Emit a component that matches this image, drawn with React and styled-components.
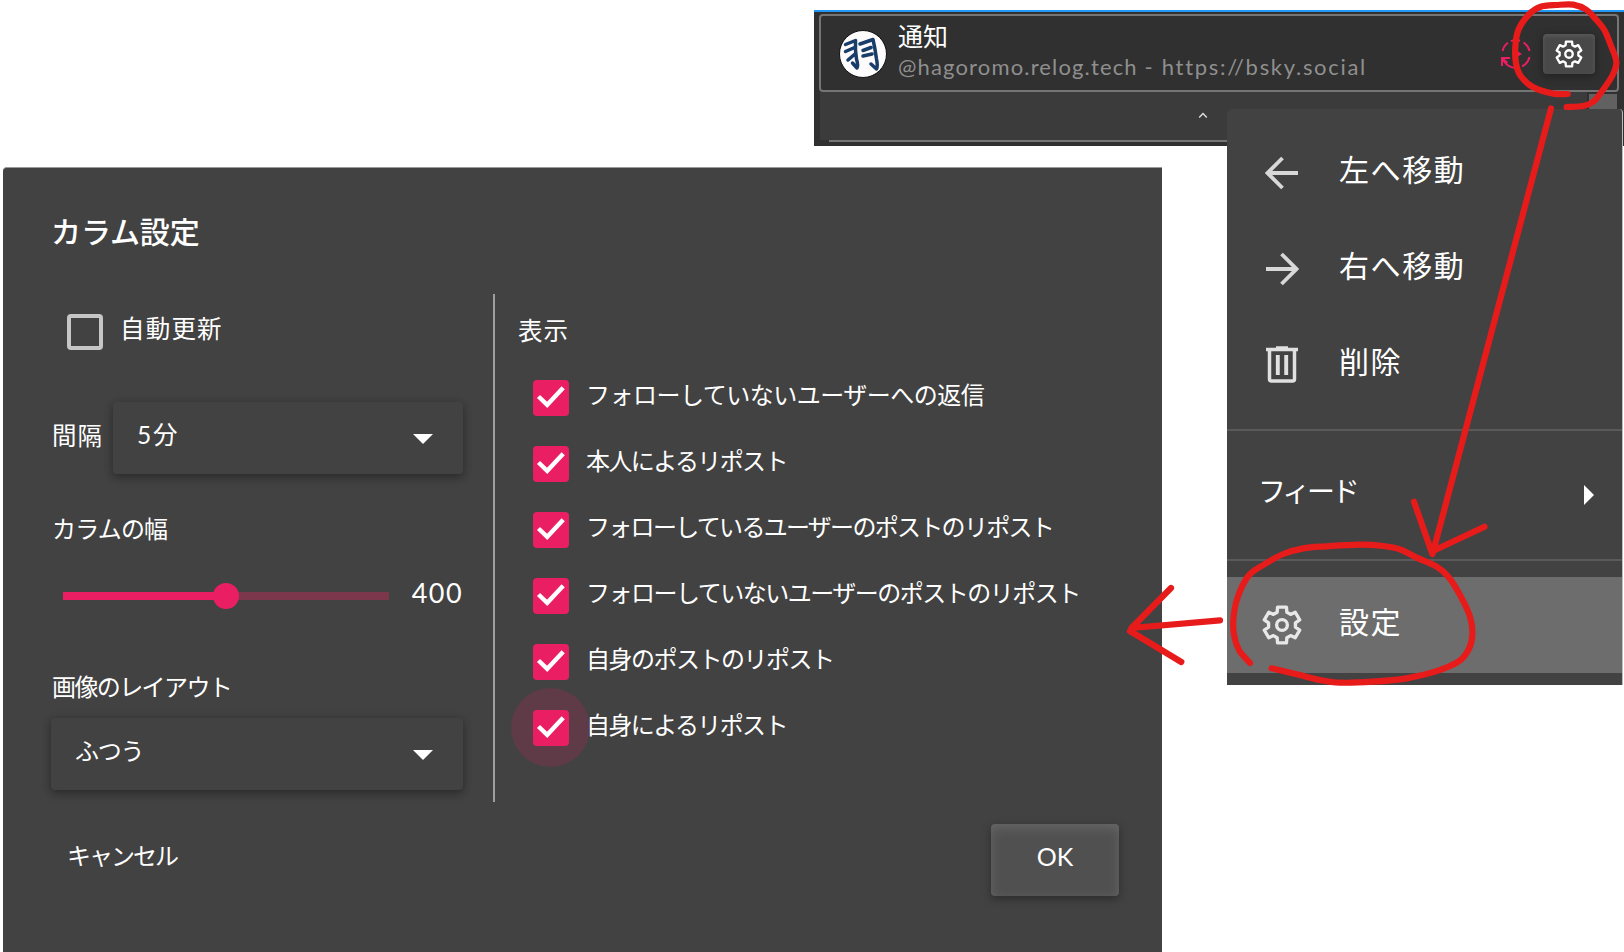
import React from 'react';
import styled, { createGlobalStyle, css } from 'styled-components';

const Global = createGlobalStyle`
  * { box-sizing: border-box; }
  html, body { margin: 0; background: #fff; }
  body { font-family: Lato, "Noto Sans CJK JP", sans-serif; color: #fff; overflow: hidden; }
  button { font: inherit; color: inherit; border: 0; padding: 0; background: none; }
`;

const Canvas = styled.main`
  position: relative;
  width: 1624px;
  height: 952px;
  overflow: hidden;
`;

const Text = styled.span`
  display: block;
  font-size: ${(p) => p.$size || 24}px;
  line-height: 36px;
  letter-spacing: ${(p) => p.$track || 0}px;
  font-weight: ${(p) => p.$weight || 400};
  color: ${(p) => p.$color || '#fff'};
  white-space: pre;
`;

/* Column */
const Column = styled.section`
  position: absolute;
  left: 814px;
  top: 10px;
  width: 810px;
  height: 136px;
  background: #303030;
  border-top: 2px solid #2196f3;
  padding: 2px 5px 0;
`;

const ColumnHeader = styled.header`
  display: flex;
  align-items: center;
  height: 78px;
  border: 2px solid #757575;
  border-radius: 4px;
  padding: 2px 22px 0 18px;
`;

const Avatar = styled.svg`
  width: 48px;
  height: 48px;
  flex: none;
`;

const Titles = styled.div`
  flex: 1;
  padding-left: 11px;
  margin-top: -5px;
`;

const TitleLine = styled.div`
  height: 31px;
  display: flex;
  align-items: center;
`;

const GearButton = styled.button`
  display: flex;
  align-items: center;
  justify-content: center;
  width: 52px;
  height: 40px;
  margin-left: 11px;
  border-radius: 4px;
  background: #484848;
  box-shadow: inset 0 2px 4px rgba(255, 255, 255, 0.1), 0 2px 8px rgba(0, 0, 0, 0.35);
`;

const ColumnBody = styled.div`
  display: flex;
  height: 48px;
  padding-left: 1px;
`;

const Collapse = styled.div`
  width: 767px;
  background: #3b3b3b;
  display: flex;
  justify-content: center;
  padding: 20px 2px 0 0;
`;

const Thumb = styled.div`
  width: 28px;
  margin: 2px 0 0 2px;
  background: #616161;
`;

const ColumnLine = styled.div`
  height: 2px;
  margin-left: 10px;
  background: #757575;
`;

/* Menu */
const Menu = styled.nav`
  position: absolute;
  left: 1227px;
  top: 109px;
  width: 396px;
  height: 576px;
  padding-top: 16px;
  border-radius: 5px 4px 0 0;
  border-right: 1px solid #bdbdbd;
  background: #424242;
  overflow: hidden;
`;

const MenuItem = styled.div`
  display: flex;
  align-items: center;
  height: 96px;
  padding: 0 28px 0 31px;
  background: ${(p) => (p.$active ? '#6d6d6d' : 'transparent')};
  ${Text} { margin-top: -8px; }
`;

const MenuIcon = styled.span`
  display: flex;
  justify-content: center;
  width: 48px;
  margin-right: 33px;
`;

const MenuDivider = styled.div`
  height: 2px;
  margin: 16px 0;
  background: #5a5a5a;
`;

const Triangle = styled.span`
  flex: none;
  width: 0;
  height: 0;
  margin-left: auto;
  border: 10px solid transparent;
  ${(p) =>
    p.$down
      ? css`border-top-color: #fff; border-bottom-width: 0; margin-top: 2px;`
      : css`border-left-color: #fff; border-right-width: 0;`}
`;

/* Dialog */
const Dialog = styled.section`
  position: absolute;
  left: 3px;
  top: 167px;
  width: 1159px;
  height: 785px;
  background: #424242;
  border-top: 1px solid #999;
  border-top-left-radius: 4px;
  padding: 45px 43px 0 48px;
`;

const DialogTitle = styled.h1`
  margin: 0;
  font-size: 30px;
  font-weight: 500;
  line-height: 36px;
  letter-spacing: -0.1px;
`;

const Columns = styled.div`
  display: flex;
  height: 508px;
  margin-top: 45px;
`;

const Left = styled.div`
  display: flex;
  flex-direction: column;
  width: 442px;
  padding: 20px 30px 0 0;
`;

const Right = styled.div`
  flex: 1;
  border-left: 2px solid #9e9e9e;
  padding: 19px 0 0 23px;
`;

const CheckRow = styled.label`
  display: flex;
  align-items: center;
  gap: 17px;
  height: 36px;
  margin-bottom: 30px;
  padding-left: ${(p) => p.$inset}px;
  isolation: isolate;
  ${Text} { margin-top: -6px; }
`;

const Box = styled.span`
  position: relative;
  display: flex;
  flex: none;
  align-items: center;
  justify-content: center;
  width: 36px;
  height: 36px;
  border-radius: 4px;
  ${(p) => (p.$checked ? css`background: #e91e63;` : css`border: 4px solid #c6c6c6;`)}
  ${(p) =>
    p.$ripple &&
    css`
      &::before {
        content: '';
        position: absolute;
        z-index: -1;
        inset: -22px -21px -21px -22px;
        border-radius: 50%;
        background: #5f3b48;
      }
    `}
`;

const CheckList = styled.div`
  padding-top: 31px;
`;

const Row = styled.div`
  display: flex;
  align-items: center;
  margin-top: ${(p) => p.$gap || 0}px;
`;

const Select = styled.div`
  display: flex;
  align-items: center;
  flex: 1;
  height: 72px;
  padding: 0 30px 0 24px;
  border-radius: 4px;
  background: #424242;
  box-shadow: 0 4px 8px rgba(0, 0, 0, 0.24), 0 1px 10px rgba(0, 0, 0, 0.16);
  ${Text} { margin-top: -6px; }
`;

const FieldLabel = styled.div`
  padding: 0 0 ${(p) => p.$lift || 0}px 1px;
  width: ${(p) => p.$width || 'auto'};
  margin-top: ${(p) => p.$top || 0}px;
`;

const Track = styled.div`
  display: flex;
  align-items: center;
  width: 326px;
  height: 8px;
  margin: 6px 23px 0 12px;
  background: linear-gradient(to right, #e91e63 50%, #7d374c 50%);
`;

const Knob = styled.span`
  width: 26px;
  height: 26px;
  margin-left: 150px;
  border-radius: 50%;
  background: #e91e63;
`;

const Actions = styled.footer`
  display: flex;
  justify-content: space-between;
  align-items: center;
  margin-top: 22px;
  padding-left: 16px;
`;

const CancelButton = styled.button`
  padding-bottom: 8px;
`;

const OkButton = styled.button`
  display: flex;
  align-items: center;
  justify-content: center;
  width: 128px;
  height: 72px;
  border-radius: 4px;
  background: #505050;
  box-shadow: inset 0 4px 12px rgba(255, 255, 255, 0.13), 0 3px 9px rgba(0, 0, 0, 0.34);
  ${Text} { margin-top: -8px; }
`;

const Ink = styled.svg`
  position: absolute;
  inset: 0;
  fill: none;
  stroke: #e81b1b;
  stroke-width: 6.2;
  stroke-linecap: round;
  stroke-linejoin: round;
`;

const gearPoints = () => {
  const pts = [];
  for (let i = 0; i < 6; i++) {
    const a = i * 60;
    pts.push([a - 21, 7.1], [a - 14, 9.6], [a + 14, 9.6], [a + 21, 7.1]);
  }
  return pts
    .map(([a, r]) => {
      const t = ((a - 90) * Math.PI) / 180;
      return `${(12 + r * Math.cos(t)).toFixed(2)},${(12 + r * Math.sin(t)).toFixed(2)}`;
    })
    .join(' ');
};

const Gear = ({ size, color = '#fff', width = 1.75 }) => (
  <svg width={size} height={size} viewBox="0 0 24 24" fill="none" stroke={color} strokeWidth={width} strokeLinejoin="round">
    <polygon points={gearPoints()} />
    <circle cx="12" cy="12" r="2.8" />
  </svg>
);

const Arrow = ({ flip }) => (
  <svg width="34" height="34" viewBox="0 0 34 34" fill="none" stroke="#d8d8d8" strokeWidth="3.8" transform={flip ? 'scale(-1 1)' : undefined}>
    <path d="M33 17H3M17.500 2L2.500 17l15 15" />
  </svg>
);

const Trash = () => (
  <svg width="34" height="38" viewBox="0 0 34 38" fill="none" stroke="#e0e0e0" strokeWidth="3.5">
    <path d="M1 3.500h32M11 2h12" />
    <path d="M4.500 4v29q0 2 2 2h21q2 0 2-2V4" />
    <path d="M12.800 9v20M21.200 9v20" strokeWidth="3.900" />
  </svg>
);

const Refresh = () => (
  <svg width="32" height="32" viewBox="0 0 32 32" fill="none" stroke="#e91e63" strokeWidth="2">
    <path d="M2.500 13A14 14 0 0 1 8 4.700M11 3A14 14 0 0 1 20 2.800M23.500 4.500A14 14 0 0 1 29.600 13M29.500 19A14 14 0 0 1 22 28.400M18.500 29.500A14 14 0 0 1 2.500 20" />
    <path d="M2 28v-8h8M2.500 20.500l5 4.500" />
    <path d="M14 11v10l8-5z" fill="#e91e63" stroke="none" />
  </svg>
);

const Check = () => (
  <svg width="36" height="36" viewBox="0 0 36 36" fill="none" stroke="#fff" strokeWidth="4.400">
    <path d="M5.500 16.500l8.700 8.300L30.200 7.800" />
  </svg>
);

const smooth = (p) => {
  let d = `M${p[0]}`;
  for (let i = 0; i < p.length - 1; i++) {
    const a = p[i - 1] || p[i];
    const b = p[i];
    const c = p[i + 1];
    const e = p[i + 2] || c;
    d += `C${b[0] + (c[0] - a[0]) / 6},${b[1] + (c[1] - a[1]) / 6} ${c[0] - (e[0] - b[0]) / 6},${c[1] - (e[1] - b[1]) / 6} ${c}`;
  }
  return d;
};

const third = (pts, y) => smooth(pts.map(([a, b]) => [1200 + a / 3, y + b / 3]));

const topLoop = [
  [1103, 282], [1060, 281], [1000, 262], [962, 228], [948, 190], [946, 140], [955, 90], [985, 45],
  [1020, 21], [1070, 15], [1120, 14], [1160, 30], [1185, 55], [1213, 90], [1232, 135], [1249, 185],
  [1238, 225], [1205, 275], [1180, 305], [1150, 318], [1100, 321],
];

const bottomLoop = [
  [150, 849], [118, 812], [103, 770], [100, 720], [112, 655], [145, 588], [190, 555], [250, 522],
  [310, 505], [380, 499], [480, 494], [550, 498], [600, 508], [650, 533], [710, 560], [745, 590],
  [780, 645], [810, 710], [817, 765], [805, 810], [775, 845], [705, 875], [620, 895], [520, 905],
  [420, 908], [350, 898], [290, 883], [215, 865],
];

const options = [
  { text: 'フォローしていないユーザーへの返信', track: -0.5 },
  { text: '本人によるリポスト', track: -1.6 },
  { text: 'フォローしているユーザーのポストのリポスト', track: -1.7 },
  { text: 'フォローしていないユーザーのポストのリポスト', track: -1.5 },
  { text: '自身のポストのリポスト', track: -1.5 },
  { text: '自身によるリポスト', track: -1.6, ripple: true },
];

export default function App() {
  return (
    <Canvas>
      <Global />
      <Column>
        <ColumnHeader>
          <Avatar viewBox="0 0 48 48">
            <circle cx="24" cy="24" r="23.5" fill="#fdfbfc" stroke="#111" />
            <g fill="none" stroke="#183d69" strokeWidth="3.5" strokeLinecap="round" strokeLinejoin="round">
              <path d="M6.500 14.500L16.500 10.500Q16 20 17.500 29Q19.500 36 18 38L13.500 33M6.500 21.500l9-4M9 30l7-6" />
              <path d="M21 14L34 9.500Q36 18 37.500 29Q39 36 37.500 39L32 34M24 20.500l8-3M24 26l9-2" />
            </g>
          </Avatar>
          <Titles>
            <TitleLine><Text $size={25}>通知</Text></TitleLine>
            <TitleLine>
              <Text $size={22} $track={1.15} $color="#8f8f8f">{'@hagoromo.relog.tech '}</Text>
              <Text $size={22} $track={1.7} $color="#8f8f8f">- https://bsky.social</Text>
            </TitleLine>
          </Titles>
          <Refresh />
          <GearButton><Gear size={32} /></GearButton>
        </ColumnHeader>
        <ColumnBody>
          <Collapse>
            <svg width="10" height="7" viewBox="0 0 10 7" fill="none" stroke="#e0e0e0" strokeWidth="1.4"><path d="M1.200 5.500L5 1.500l3.800 4" /></svg>
          </Collapse>
          <Thumb />
        </ColumnBody>
        <ColumnLine />
      </Column>

      <Menu>
        <MenuItem><MenuIcon><Arrow /></MenuIcon><Text $size={30} $track={1.6}>左へ移動</Text></MenuItem>
        <MenuItem><MenuIcon><Arrow flip /></MenuIcon><Text $size={30} $track={1.6}>右へ移動</Text></MenuItem>
        <MenuItem><MenuIcon><Trash /></MenuIcon><Text $size={30} $track={1.6}>削除</Text></MenuItem>
        <MenuDivider />
        <MenuItem><Text $size={28} $track={-3.2}>フィード</Text><Triangle /></MenuItem>
        <MenuDivider />
        <MenuItem $active><MenuIcon><Gear size={46} color="#e8e8e8" /></MenuIcon><Text $size={30} $track={1.6}>設定</Text></MenuItem>
      </Menu>

      <Dialog>
        <DialogTitle>カラム設定</DialogTitle>
        <Columns>
          <Left>
            <CheckRow $inset={16}><Box /><Text $size={24.5} $track={1.2}>自動更新</Text></CheckRow>
            <Row $gap={22}>
              <FieldLabel $width="62px" $lift={5}><Text $size={24.5} $track={1}>間隔</Text></FieldLabel>
              <Select><Text $size={24.5} $track={1.8}>5分</Text><Triangle $down /></Select>
            </Row>
            <FieldLabel $top={37}><Text $track={-0.8}>カラムの幅</Text></FieldLabel>
            <Row $gap={28}><Track><Knob /></Track><Text $size={27} $track={1.4}>400</Text></Row>
            <FieldLabel $top={58} $lift={13}><Text $track={-1.6}>画像のレイアウト</Text></FieldLabel>
            <Row><Select><Text $track={-1.2}>ふつう</Text><Triangle $down /></Select></Row>
          </Left>
          <Right>
            <Text $size={24.5} $track={1}>表示</Text>
            <CheckList>
              {options.map((o) => (
                <CheckRow key={o.text} $inset={15}>
                  <Box $checked $ripple={o.ripple}><Check /></Box>
                  <Text $track={o.track}>{o.text}</Text>
                </CheckRow>
              ))}
            </CheckList>
          </Right>
        </Columns>
        <Actions>
          <CancelButton><Text $track={-2}>キャンセル</Text></CancelButton>
          <OkButton><Text $size={25}>OK</Text></OkButton>
        </Actions>
      </Dialog>

      <Ink width="1624" height="952" viewBox="0 0 1624 952">
        <path d={third(topLoop, 0)} />
        <path d={third(bottomLoop, 380)} />
        <path d="M1551 108.500L1432.500 554M1414 501.700L1432 553M1484.500 526.700L1434 550.500" />
        <path d="M1220 620.300L1131.500 628L1171 588M1130 631L1181.300 662" />
      </Ink>
    </Canvas>
  );
}
